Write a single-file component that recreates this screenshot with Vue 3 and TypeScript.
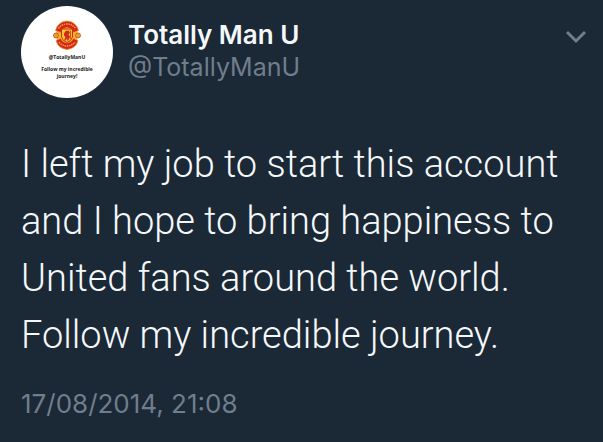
<script setup lang="ts">
interface Tweet {
  name: string
  handle: string
  text: string
  dateTime: string
  date: string
}

const tweet: Tweet = {
  name: 'Totally Man U',
  handle: '@TotallyManU',
  text: 'I left my job to start this account and I hope to bring happiness to United fans around the world. Follow my incredible journey.',
  dateTime: '2014-08-17T21:08',
  date: '17/08/2014, 21:08',
}
</script>

<template>
  <article class="tweet">
    <header class="head">
      <div class="avatar">
        <svg class="crest" viewBox="0 0 56 60" aria-hidden="true">
          <circle cx="28" cy="30" r="22" fill="#f6b52c" />
          <circle cx="6" cy="31" r="5" fill="#e8a02a" stroke="#c8421c" stroke-width="1.5" />
          <circle cx="50" cy="31" r="5" fill="#e8a02a" stroke="#c8421c" stroke-width="1.5" />
          <path d="M5 21Q10 3 28 2Q46 3 51 21L41 25Q38 16 28 15Q18 16 15 25Z" fill="#d3261b" stroke="#e8962a" stroke-width="1.5" />
          <path d="M6 41L15 37Q19 45 28 46Q37 45 41 37L50 41Q46 57 28 59Q10 57 6 41Z" fill="#d3261b" stroke="#e8962a" stroke-width="1.5" />
          <path d="M11 17Q17 8 28 8Q39 8 45 17M12 44Q18 52 28 52Q38 52 44 44" fill="none" stroke="#f6a13a" stroke-width="3" stroke-dasharray="3 1.5" />
          <path d="M17 18H39V34Q37 42 28 45Q19 42 17 34Z" fill="#f9c62e" stroke="#c8321c" stroke-width="2" />
          <path d="M22 27L25 22L31 21L34 25L31 29L34 33L31 41H28L29 36L25 41H22L25 34L22 31Z" fill="#cf2a1b" />
          <path d="M35 21V38" stroke="#cf2a1b" stroke-width="1.5" />
        </svg>
        <span class="avatar-handle">@TotallyManU</span>
        <span class="avatar-text">Follow my incredible journey!</span>
      </div>
      <div class="author">
        <span class="name">{{ tweet.name }}</span>
        <a class="handle" href="#">{{ tweet.handle }}</a>
      </div>
      <button class="menu" type="button" aria-label="More options">
        <svg width="22" height="14" viewBox="0 0 22 14" aria-hidden="true">
          <path d="M2 2L11 11L20 2" fill="none" stroke="#6f7e8c" stroke-width="3" />
        </svg>
      </button>
    </header>
    <p class="text">{{ tweet.text }}</p>
    <time class="date" :datetime="tweet.dateTime">{{ tweet.date }}</time>
  </article>
</template>

<style>
body {
  margin: 0;
  background: #1b2836;
}
</style>

<style scoped>
.tweet {
  box-sizing: border-box;
  min-height: 100vh;
  padding: 6px 16px 20px 21px;
  background: #1b2836;
  color: #f5f8fa;
  font-family: Inter, "Liberation Sans", sans-serif;
}

.head {
  display: flex;
  align-items: flex-start;
}

.avatar {
  display: flex;
  box-sizing: border-box;
  flex: none;
  flex-direction: column;
  align-items: center;
  width: 92px;
  height: 92px;
  padding-top: 14px;
  border-radius: 50%;
  background: #fff;
  color: #222;
  font: 700 5px/7px "Open Sans", sans-serif;
  text-align: center;
}

.crest {
  width: 28px;
  height: 30px;
}

.avatar-handle {
  margin-top: 4px;
}

.avatar-text {
  width: 60px;
  margin-top: 5px;
}

.author {
  display: flex;
  flex: 1;
  flex-direction: column;
  min-width: 0;
  padding: 12px 0 0 15px;
  font-size: 26px;
  line-height: 33px;
}

.name {
  font-weight: 600;
}

.handle {
  color: #6f7e8c;
  font-size: 25px;
  text-decoration: none;
}

.menu {
  display: flex;
  margin-top: 18px;
  padding: 6px 0;
  border: 0;
  background: none;
  cursor: pointer;
}

.text {
  margin: 38px 0 0;
  font-family: Roboto, "Liberation Sans", sans-serif;
  font-size: 38px;
  font-weight: 300;
  line-height: 57px;
}

.date {
  display: block;
  margin-top: 23px;
  color: #6f7e8c;
  font-size: 26px;
  line-height: 33px;
}
</style>
